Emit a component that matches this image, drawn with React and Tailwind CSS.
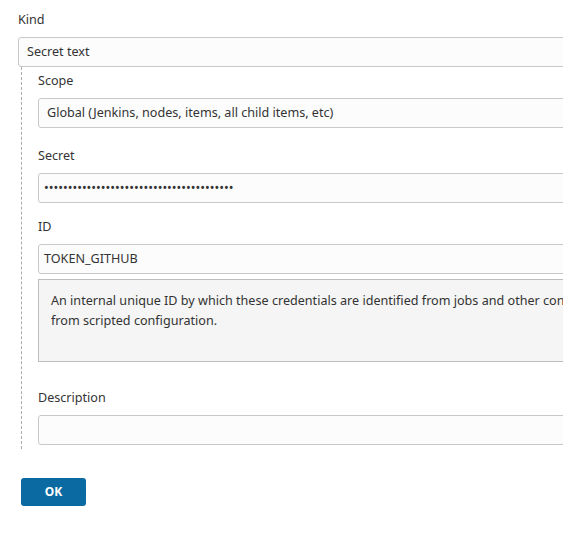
import React from "react";

const Label = ({ children, className = "" }) => (
  <div className={`h-[20px] leading-[20px] pt-[1px] mb-[8px] ${className}`}>{children}</div>
);

const Box = ({ children, pad = "pl-[8px]" }) => (
  <div
    className={`h-[30px] w-[620px] border border-[#c8c8c8] rounded-[3px] bg-[#fcfcfc] ${pad} pt-[1px] flex items-center whitespace-nowrap overflow-hidden`}
  >
    {children}
  </div>
);

export default function App() {
  return (
    <div className="w-[563px] h-[554px] overflow-hidden bg-white text-[12.6px] text-[#333] font-['Noto_Sans',sans-serif]">
      <div className="pt-[9px] pl-[18px]">
        <Label>Kind</Label>
        <Box>Secret text</Box>

        {/* nested credential fields */}
        <div className="ml-[3px] border-l border-dashed border-[#aaa] pl-[16px] pt-[3px] pb-[4px]">
          <Label>Scope</Label>
          <Box>Global (Jenkins, nodes, items, all child items, etc)</Box>

          <Label className="mt-[17px]">Secret</Label>
          <Box pad="pl-[5px]">
            <input
              type="password"
              readOnly
              value="••••••••••••••••••••••••••••••••••••••••"
              className="w-full bg-transparent outline-none text-[#333]"
            />
          </Box>

          <Label className="mt-[13px]">ID</Label>
          <Box pad="pl-[5px]">TOKEN_GITHUB</Box>

          <div className="mt-[5px] h-[83px] w-[620px] border border-[#bdbdbd] bg-[#f5f5f5] pl-[12px] pt-[11px] leading-[20px] whitespace-nowrap overflow-hidden">
            An internal unique ID by which these credentials are identified from jobs and other configuration, such as
            <br />
            from scripted configuration.
          </div>

          <Label className="mt-[25px]">Description</Label>
          <Box pad="pl-[5px]"></Box>
        </div>

        <button className="mt-[29px] ml-[3px] w-[65px] h-[28px] rounded-[3px] bg-[#0b6aa2] text-white text-[12px] font-bold">
          OK
        </button>
      </div>
    </div>
  );
}
